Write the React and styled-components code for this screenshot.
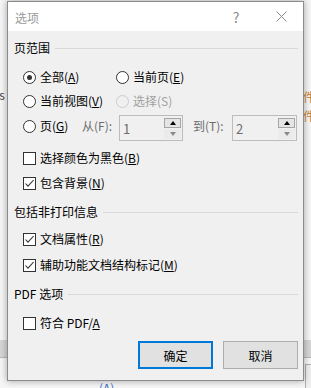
import React from "react";
import styled, { createGlobalStyle } from "styled-components";

const Global = createGlobalStyle`
  html, body { margin: 0; padding: 0; }
  body {
    width: 311px; height: 388px; overflow: hidden;
    background: #f4f4f4;
    font-family: "Noto Sans CJK SC", "Noto Sans", sans-serif;
    font-size: 12px;
  }
`;

const Desktop = styled.div`
  position: relative;
  width: 311px;
  height: 388px;
  overflow: hidden;
  background: #f6f6f6;
`;

const BgText = styled.div`
  position: absolute;
  left: ${(p) => p.$x}px;
  top: ${(p) => p.$y}px;
  color: ${(p) => p.$c || "#444"};
  font-size: 12px;
  line-height: 16px;
  white-space: nowrap;
`;

const BgBand = styled.div`
  position: absolute;
  left: 0;
  top: 340px;
  width: 311px;
  height: 17px;
  background: #d6d6d6;
  border-bottom: 1px solid #b8b8b8;
`;

const BgBox = styled.div`
  position: absolute;
  left: 305px;
  top: 364px;
  width: 20px;
  height: 40px;
  border: 1px solid #b0b0b0;
  background: #efefef;
`;

const Dialog = styled.div`
  position: absolute;
  left: 7px;
  top: 1px;
  width: 295px;
  height: 378px;
  border: 1px solid #8c8c8c;
  background: #f0f0f0;
  box-shadow: 0 0 7px rgba(0, 0, 0, 0.35);
  display: flex;
  flex-direction: column;
`;

const TitleBar = styled.div`
  height: 29px;
  background: #fff;
  display: flex;
  align-items: center;
  padding-left: 7px;
  padding-right: 8px;
  color: #9a9a9a;
  font-size: 12px;
`;

const TitleText = styled.span`
  flex: 1;
  margin-top: 1px;
`;

const TitleButton = styled.span`
  width: ${(p) => p.$w}px;
  display: flex;
  justify-content: center;
  align-items: center;
  color: #8a8a8a;
  font-size: 14px;
`;

const Body = styled.div`
  flex: 1;
  display: flex;
  flex-direction: column;
  padding: 8px 5px 0 6px;
  color: #000;
  line-height: 16px;
`;

const SectionHeader = styled.div`
  display: flex;
  align-items: center;
  height: 18px;
  gap: 5px;
  margin-top: ${(p) => p.$mt || 0}px;
  &::after {
    content: "";
    flex: 1;
    height: 1px;
    background: #d9d9d9;
  }
`;

const Grid = styled.div`
  display: grid;
  grid-template-columns: 93px auto;
  grid-auto-rows: 24px;
  margin-top: 8px;
  padding-left: 9px;
`;

const Item = styled.label`
  display: flex;
  align-items: center;
  gap: 4px;
  height: ${(p) => p.$h || 24}px;
  color: ${(p) => (p.$disabled ? "#a0a0a0" : "#000")};
  white-space: nowrap;
`;

const Radio = styled.span`
  width: 13px;
  height: 13px;
  box-sizing: border-box;
  border-radius: 50%;
  border: 1px solid ${(p) => (p.$disabled ? "#cccccc" : "#333")};
  background: ${(p) => (p.$disabled ? "#f0f0f0" : "#fff")};
  display: flex;
  align-items: center;
  justify-content: center;
  flex: none;
  &::after {
    content: "";
    display: ${(p) => (p.$checked ? "block" : "none")};
    width: 5px;
    height: 5px;
    border-radius: 50%;
    background: #333;
  }
`;

const Box = styled.span`
  width: 13px;
  height: 13px;
  box-sizing: border-box;
  border: 1px solid #333;
  background: #fff;
  display: flex;
  align-items: center;
  justify-content: center;
  flex: none;
`;

const PageRow = styled.div`
  display: flex;
  align-items: flex-start;
  height: 28px;
  margin-top: 1px;
  padding-left: 9px;
`;

const PageLabel = styled.div`
  width: 59px;
  height: 24px;
  display: flex;
  align-items: center;
`;

const FieldLabel = styled.span`
  width: ${(p) => p.$w}px;
  height: 24px;
  display: flex;
  align-items: center;
  color: #6d6d6d;
  white-space: nowrap;
`;

const Spin = styled.div`
  width: ${(p) => p.$w}px;
  height: 26px;
  box-sizing: border-box;
  margin-top: 1px;
  border: 1px solid #bcbcbc;
  background: #f0f0f0;
  display: flex;
  margin-right: ${(p) => p.$mr || 0}px;
`;

const SpinValue = styled.span`
  flex: 1;
  padding-left: 3px;
  color: #6d6d6d;
  font-size: 13px;
  line-height: 26px;
`;

const SpinButtons = styled.div`
  width: 17px;
  display: flex;
  flex-direction: column;
  padding: 2px 1px 0 0;
`;

const SpinBtn = styled.div`
  height: 11px;
  box-sizing: border-box;
  border: 1px solid ${(p) => (p.$active ? "#a6a6a6" : "transparent")};
  background: ${(p) => (p.$active ? "#e5e5e5" : "#ebebeb")};
  display: flex;
  align-items: center;
  justify-content: center;
  margin-bottom: 1px;
  &::after {
    content: "";
    width: 0;
    height: 0;
    border-left: 3.5px solid transparent;
    border-right: 3.5px solid transparent;
    ${(p) =>
      p.$up
        ? "border-bottom: 4px solid #000;"
        : "border-top: 4px solid #8a8a8a;"}
  }
`;

const Checks = styled.div`
  display: flex;
  flex-direction: column;
  padding-left: 9px;
  margin-top: ${(p) => p.$mt || 0}px;
  gap: ${(p) => p.$gap || 1}px;
`;

const Buttons = styled.div`
  display: flex;
  justify-content: flex-end;
  gap: 10px;
  margin-top: 6px;
`;

const Button = styled.button`
  width: 75px;
  height: 28px;
  box-sizing: border-box;
  background: #e1e1e1;
  border: ${(p) => (p.$primary ? "2px solid #0078d7" : "1px solid #adadad")};
  font-family: "Noto Sans CJK SC", "Noto Sans", sans-serif;
  font-size: 12px;
  color: #000;
  padding: 0;
`;

const Check = () => (
  <svg width="11" height="11" viewBox="0 0 11 11">
    <path d="M1.5 5.5 L4 8.2 L9.6 2" fill="none" stroke="#333" strokeWidth="1.1" />
  </svg>
);

const CheckItem = ({ checked, children }) => (
  <Item>
    <Box>{checked && <Check />}</Box>
    <span>{children}</span>
  </Item>
);

export default function App() {
  return (
    <>
      <Global />
      <Desktop>
        <BgText $x={-8} $y={87}>os</BgText>
        <BgText $x={303} $y={89} $c="#c7843a">件</BgText>
        <BgText $x={303} $y={108} $c="#c7843a">件</BgText>
        <BgBand />
        <BgBox />
        <BgText $x={99} $y={380} $c="#3a6fc0">(A)</BgText>
        <Dialog>
          <TitleBar>
            <TitleText>选项</TitleText>
            <TitleButton $w={62}>?</TitleButton>
            <TitleButton $w={28}>
              <svg width="11" height="11" viewBox="0 0 11 11">
                <path d="M0.5 0.5 L10.5 10.5 M10.5 0.5 L0.5 10.5" stroke="#8a8a8a" strokeWidth="1" />
              </svg>
            </TitleButton>
          </TitleBar>
          <Body>
            <SectionHeader>页范围</SectionHeader>
            <Grid>
              <Item>
                <Radio $checked />
                <span>全部(<u>A</u>)</span>
              </Item>
              <Item>
                <Radio />
                <span>当前页(<u>E</u>)</span>
              </Item>
              <Item>
                <Radio />
                <span>当前视图(<u>V</u>)</span>
              </Item>
              <Item $disabled>
                <Radio $disabled />
                <span>选择(S)</span>
              </Item>
            </Grid>
            <PageRow>
              <PageLabel>
                <Item>
                  <Radio />
                  <span>页(<u>G</u>)</span>
                </Item>
              </PageLabel>
              <FieldLabel $w={37}>从(F):</FieldLabel>
              <Spin $w={64} $mr={10}>
                <SpinValue>1</SpinValue>
                <SpinButtons>
                  <SpinBtn $up $active />
                  <SpinBtn />
                </SpinButtons>
              </Spin>
              <FieldLabel $w={39}>到(T):</FieldLabel>
              <Spin $w={65}>
                <SpinValue>2</SpinValue>
                <SpinButtons>
                  <SpinBtn $up $active />
                  <SpinBtn />
                </SpinButtons>
              </Spin>
            </PageRow>
            <Checks $mt={4}>
              <CheckItem>选择颜色为黑色(<u>B</u>)</CheckItem>
              <CheckItem checked>包含背景(<u>N</u>)</CheckItem>
            </Checks>
            <SectionHeader $mt={8}>包括非打印信息</SectionHeader>
            <Checks $mt={6} $gap={2}>
              <CheckItem checked>文档属性(<u>R</u>)</CheckItem>
              <CheckItem checked>辅助功能文档结构标记(<u>M</u>)</CheckItem>
            </Checks>
            <SectionHeader $mt={8}>PDF 选项</SectionHeader>
            <Checks $mt={8}>
              <CheckItem>符合 PDF/<u>A</u></CheckItem>
            </Checks>
            <Buttons>
              <Button $primary>确定</Button>
              <Button>取消</Button>
            </Buttons>
          </Body>
        </Dialog>
      </Desktop>
    </>
  );
}
